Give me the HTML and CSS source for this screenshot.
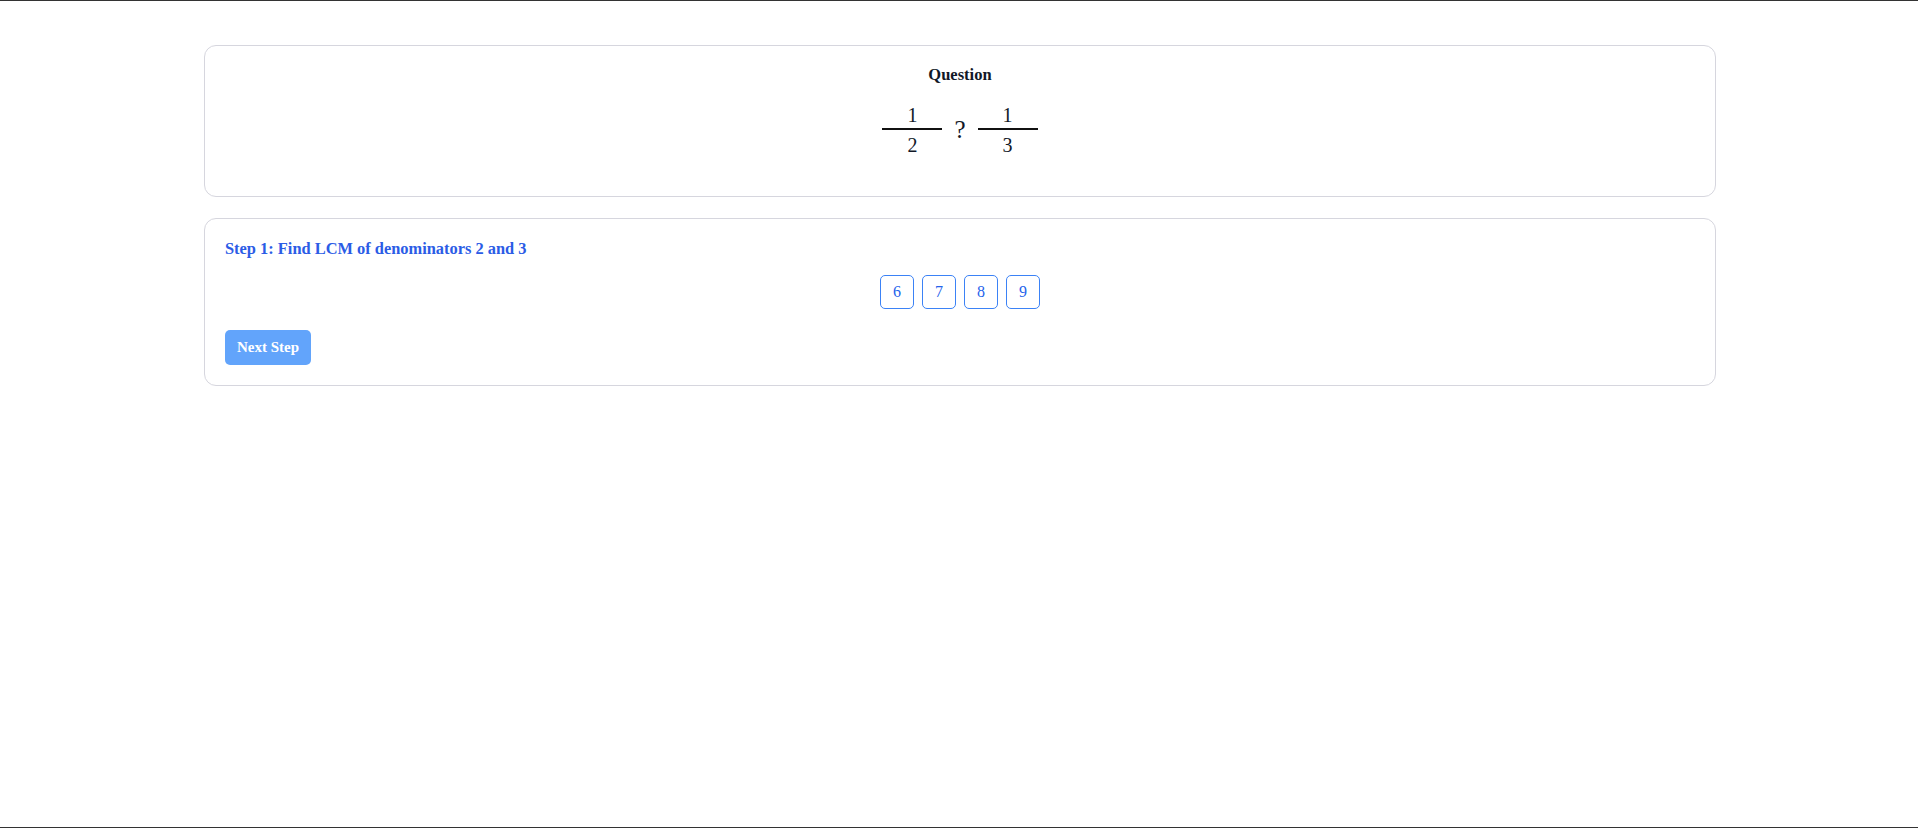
FILE: index.html
```html
<!DOCTYPE html>
<html>
<head>
<meta charset="utf-8">
<link rel="stylesheet" href="styles.css">
</head>
<body>
<div class="frame">
  <div class="container">
    <section class="card question-card">
      <h2 class="question-title">Question</h2>
      <div class="expression">
        <span class="fraction">
          <span class="num">1</span>
          <span class="den">2</span>
        </span>
        <span class="op">?</span>
        <span class="fraction">
          <span class="num">1</span>
          <span class="den">3</span>
        </span>
      </div>
    </section>
    <section class="card step-card">
      <h3 class="step-title">Step 1: Find LCM of denominators 2 and 3</h3>
      <div class="options">
        <button class="option">6</button>
        <button class="option">7</button>
        <button class="option">8</button>
        <button class="option">9</button>
      </div>
      <button class="next-btn">Next Step</button>
    </section>
  </div>
</div>
</body>
</html>
```
FILE: styles.css
```css
html, body {
  margin: 0;
  padding: 0;
  background: #ffffff;
}
body {
  font-family: Georgia, "Liberation Serif", serif;
  color: #111827;
}
.frame {
  box-sizing: border-box;
  height: 828px;
  border-top: 1px solid #333333;
  border-bottom: 1px solid #333333;
  padding-top: 44px;
}
.container {
  width: 1512px;
  margin: 0 auto 0 204px;
  display: flex;
  flex-direction: column;
  gap: 21px;
}
.card {
  box-sizing: border-box;
  border: 1px solid #d6d6de;
  border-radius: 12px;
  padding: 20px;
  background: #fff;
}
.question-card {
  height: 152px;
  display: flex;
  flex-direction: column;
  align-items: center;
}
.question-title {
  margin: 0;
  font-size: 16.5px;
  font-weight: bold;
  line-height: 18px;
  color: #111827;
}
.expression {
  margin-top: 20px;
  display: flex;
  align-items: center;
  gap: 12px;
  font-family: "Liberation Serif", serif;
}
.fraction {
  display: inline-flex;
  flex-direction: column;
  align-items: center;
  width: 60px;
  font-size: 20px;
}
.num {
  display: block;
  width: 100%;
  text-align: center;
  line-height: 22px;
  padding-bottom: 2px;
  border-bottom: 2px solid #111;
}
.den {
  display: block;
  line-height: 26px;
  padding-top: 2px;
}
.op {
  font-size: 25px;
  line-height: 24px;
  margin-top: -2px;
}
.step-title {
  margin: 0;
  font-size: 16.4px;
  font-weight: bold;
  line-height: 20px;
  color: #2b5ce6;
}
.options {
  margin-top: 16px;
  display: flex;
  justify-content: center;
  gap: 8px;
}
.option {
  box-sizing: border-box;
  width: 34px;
  height: 34px;
  padding: 0;
  border: 1.5px solid #3b82f6;
  border-radius: 5px;
  background: #fff;
  color: #2563eb;
  font-family: Georgia, "Liberation Serif", serif;
  font-size: 16px;
}
.next-btn {
  margin-top: 21px;
  box-sizing: border-box;
  width: 86px;
  height: 35px;
  padding: 0;
  border: none;
  border-radius: 5px;
  background: #62a4fb;
  color: #ffffff;
  font-family: Georgia, "Liberation Serif", serif;
  font-size: 15px;
  font-weight: bold;
  align-self: flex-start;
}
.step-card {
  display: flex;
  flex-direction: column;
}
```
